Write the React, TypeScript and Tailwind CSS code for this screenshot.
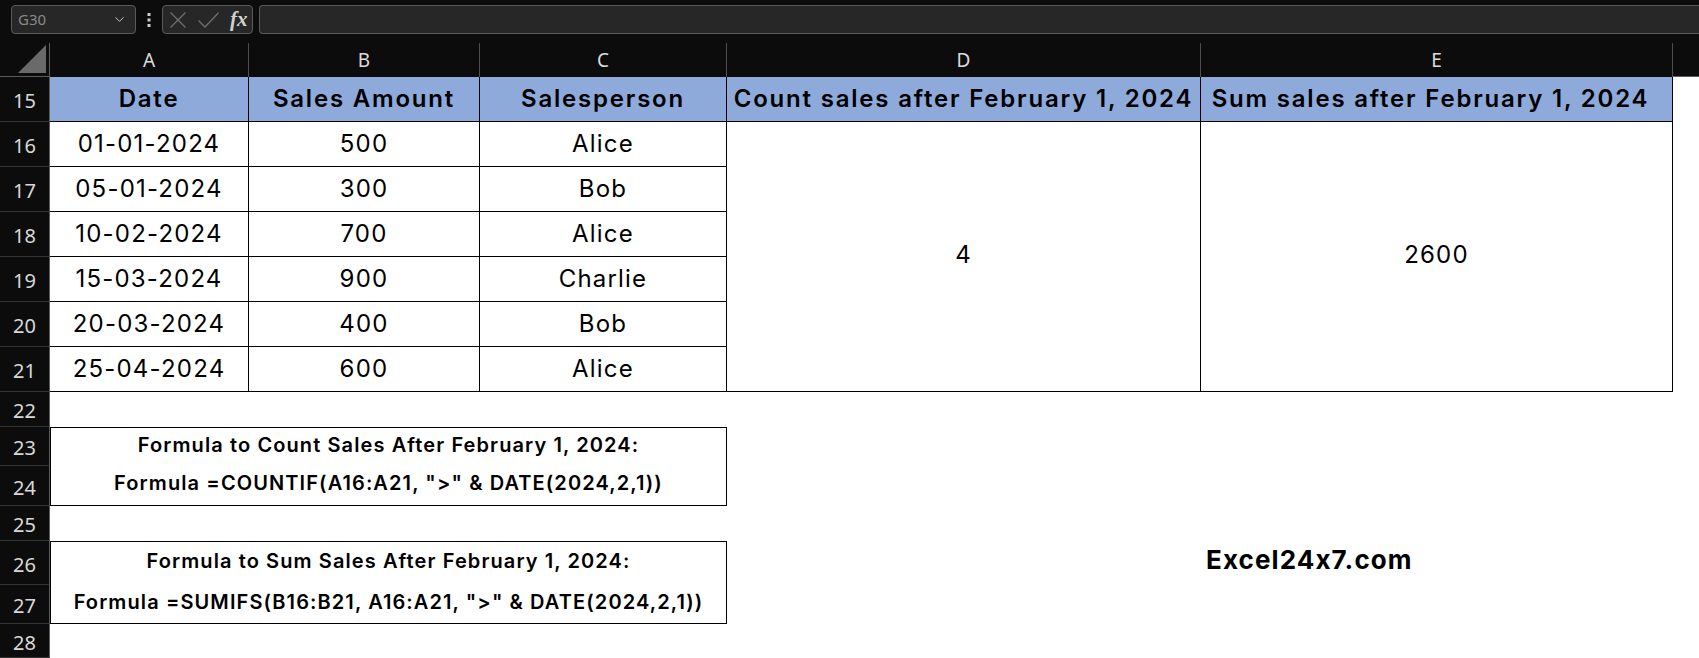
import React from 'react';
import { ChevronDown } from 'lucide-react';

const data = [
  ['01-01-2024', '500', 'Alice'],
  ['05-01-2024', '300', 'Bob'],
  ['10-02-2024', '700', 'Alice'],
  ['15-03-2024', '900', 'Charlie'],
  ['20-03-2024', '400', 'Bob'],
  ['25-04-2024', '600', 'Alice'],
];

const RowHead = ({ n }: { n: number }) => (
  <div className="flex items-center justify-center border-r border-b border-r-[#5c5c5c] border-b-[#343434] bg-[#0c0c0c] pt-1 text-[20px] text-[#d8d8d8] font-['Noto_Sans',sans-serif]">
    {n}
  </div>
);

const ColHead = ({ label }: { label: string }) => (
  <div className="flex items-center justify-center border-r border-[#4e4e4e] bg-[#0c0c0c] text-[19px] text-[#dcdcdc] font-['Noto_Sans',sans-serif]">
    {label}
  </div>
);

const cell = 'flex items-center justify-center border-r border-b border-black';
const head = 'bg-[#8eaadb] text-[24px] font-semibold tracking-[1.8px] whitespace-nowrap';
const val = 'text-[24px] tracking-[1.2px]';

const App = () => {
  return (
    <div className="w-[1699px] h-[658px] overflow-hidden bg-white font-['Inter',sans-serif] text-black [font-variant-ligatures:no-contextual]">
      {/* Formula bar */}
      <div className="flex h-[43px] items-start bg-[#0c0c0c] pl-[11px] pt-[5px]">
        <div className="flex h-[29px] w-[125px] items-center justify-between rounded-[4px] border border-[#5a5a5a] bg-[#272727] pl-[6px] pr-2 text-[15px] text-[#8a8a8a] font-['Noto_Sans',sans-serif]">
          <span>G30</span>
          <ChevronDown size={15} className="text-[#cfcfcf]" strokeWidth={1.5} />
        </div>
        <div className="flex h-[29px] w-[26px] items-center justify-center text-[#cfcfcf]">
          <svg width="4" height="14" viewBox="0 0 4 14">
            <rect x="0.5" y="0" width="3" height="3" fill="currentColor" />
            <rect x="0.5" y="5.5" width="3" height="3" fill="currentColor" />
            <rect x="0.5" y="11" width="3" height="3" fill="currentColor" />
          </svg>
        </div>
        <div className="flex h-[29px] w-[91px] items-center rounded-[4px] border border-[#5a5a5a] bg-[#272727] pl-[7px]">
          <svg width="16" height="16" viewBox="0 0 16 16" className="text-[#6f6f6f]">
            <path d="M0.5 0.5 15.5 15.5M15.5 0.5 0.5 15.5" stroke="currentColor" strokeWidth="1.3" fill="none" />
          </svg>
          <svg width="21" height="16" viewBox="0 0 21 16" className="ml-[12px] text-[#6f6f6f]">
            <path d="M0.5 8.5 7 15 20.5 0.8" stroke="currentColor" strokeWidth="1.3" fill="none" />
          </svg>
          <span className="ml-[11px] text-[21px] font-bold italic leading-none text-[#d0d0d0] font-['Liberation_Serif',serif]">fx</span>
        </div>
        <div className="ml-[6px] h-[29px] flex-1 rounded-l-[4px] border border-r-0 border-[#5a5a5a] bg-[#272727]" />
      </div>

      {/* Sheet grid */}
      <div className="grid grid-cols-[50px_199px_231px_247px_474px_472px_1fr] grid-rows-[34px_45px_45px_45px_45px_45px_45px_45px_35px_39px_40px_35px_44px_39px_34px]">
        {/* column headers */}
        <div className="relative border-r border-b border-r-[#5c5c5c] border-b-[#5c5c5c] bg-[#0c0c0c]">
          <svg className="absolute right-[3px] bottom-[3px]" width="28" height="28" viewBox="0 0 28 28">
            <polygon points="28,0 28,28 0,28" fill="#6a6a6a" />
          </svg>
        </div>
        <ColHead label="A" />
        <ColHead label="B" />
        <ColHead label="C" />
        <ColHead label="D" />
        <ColHead label="E" />
        <div className="border-b border-[#5c5c5c] bg-[#0c0c0c]" />

        {/* row 15 - table header */}
        <RowHead n={15} />
        <div className={`${cell} ${head}`}>Date</div>
        <div className={`${cell} ${head}`}>Sales Amount</div>
        <div className={`${cell} ${head}`}>Salesperson</div>
        <div className={`${cell} ${head}`}>Count sales after February 1, 2024</div>
        <div className={`${cell} ${head} pr-[12px]`}>Sum sales after February 1, 2024</div>
        <div />

        {/* rows 16-21 */}
        {data.map((r, i) => (
          <React.Fragment key={i}>
            <RowHead n={16 + i} />
            <div className={`${cell} ${val}`}>{r[0]}</div>
            <div className={`${cell} ${val}`}>{r[1]}</div>
            <div className={`${cell} ${val}`}>{r[2]}</div>
            {i === 0 && (
              <>
                <div className={`${cell} row-span-6 pb-[4px] ${val}`}>4</div>
                <div className={`${cell} row-span-6 pb-[4px] ${val}`}>2600</div>
              </>
            )}
            <div />
          </React.Fragment>
        ))}

        {/* row 22 */}
        <RowHead n={22} />
        <div className="col-span-6" />

        {/* rows 23-24 */}
        <RowHead n={23} />
        <div className="col-span-3 row-span-2 grid grid-rows-[38px_40px] border border-black text-[20px] font-semibold tracking-[1.1px] whitespace-nowrap">
          <div className="flex items-center justify-center pb-[5px]">Formula to Count Sales After February 1, 2024:</div>
          <div className="flex items-center justify-center pb-[6px]">Formula =COUNTIF(A16:A21, "&gt;" &amp; DATE(2024,2,1))</div>
        </div>
        <div className="col-span-3" />
        <RowHead n={24} />
        <div className="col-span-3" />

        {/* row 25 */}
        <RowHead n={25} />
        <div className="col-span-6" />

        {/* rows 26-27 */}
        <RowHead n={26} />
        <div className="col-span-3 row-span-2 grid grid-rows-[44px_38px] border border-black text-[20px] font-semibold tracking-[1.1px] whitespace-nowrap">
          <div className="flex items-center justify-center pb-[6px]">Formula to Sum Sales After February 1, 2024:</div>
          <div className="flex items-center justify-center pb-[6px]">Formula =SUMIFS(B16:B21, A16:A21, "&gt;" &amp; DATE(2024,2,1))</div>
        </div>
        <div />
        <div className="flex items-center pb-[7px] pl-[5px] text-[26px] font-bold tracking-[1.1px] whitespace-nowrap">Excel24x7.com</div>
        <div />
        <RowHead n={27} />
        <div className="col-span-3" />

        {/* row 28 */}
        <RowHead n={28} />
        <div className="col-span-6" />
      </div>
    </div>
  );
};

export default App;
